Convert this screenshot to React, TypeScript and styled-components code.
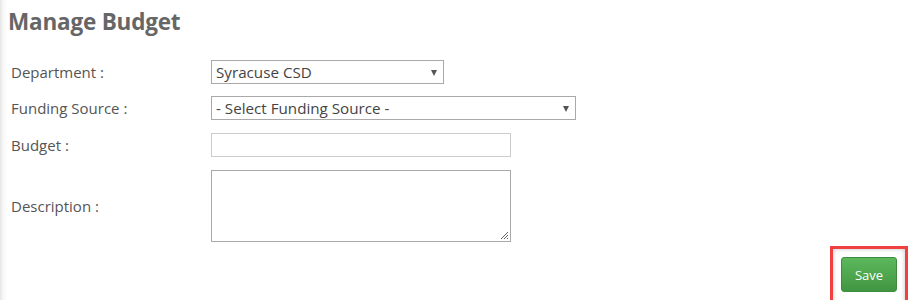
import React from "react";
import styled, { createGlobalStyle } from "styled-components";

const GlobalStyle = createGlobalStyle`
  html, body {
    margin: 0;
    padding: 0;
    background: #fff;
  }
  body {
    font-family: "Open Sans", "Noto Sans", sans-serif;
    color: #555;
  }
`;

const Page = styled.div`
  position: relative;
  width: 924px;
  height: 300px;
  overflow: hidden;
  background: linear-gradient(to right, #e6e6e6 0px, #f7f7f7 3px, #fff 7px);
`;

const Title = styled.h2`
  margin: 0;
  padding: 5px 0 0 8px;
  font-size: 22.5px;
  font-weight: 700;
  color: #666;
  line-height: 34px;
  letter-spacing: -0.2px;
`;

const Form = styled.div`
  display: grid;
  grid-template-columns: 200px auto;
  row-gap: 12px;
  padding: 21px 0 0 11px;
  align-items: center;
`;

const Label = styled.label`
  font-size: 15px;
  color: #555;
  line-height: 20px;
`;

const Field = styled.div<{ $gap?: number }>`
  display: flex;
  margin-top: ${(p) => p.$gap ?? 0}px;
`;

const SelectBox = styled.div<{ $width: number }>`
  position: relative;
  box-sizing: border-box;
  width: ${(p) => p.$width}px;
  height: 24px;
  border: 1px solid #a9a9a9;
  padding: 0 4px;
  font-size: 15.2px;
  line-height: 22px;
  color: #444;
  background: #fff;
`;

const Arrow = styled.span`
  position: absolute;
  right: 6px;
  top: 9px;
  width: 0;
  height: 0;
  border-left: 3.5px solid transparent;
  border-right: 3.5px solid transparent;
  border-top: 6px solid #555;
`;

const TextInput = styled.div`
  box-sizing: border-box;
  width: 300px;
  height: 24px;
  border: 1px solid #ccc;
  background: #fff;
`;

const TextArea = styled.div`
  position: relative;
  box-sizing: border-box;
  width: 300px;
  height: 72px;
  border: 1px solid #a9a9a9;
  background: #fff;
`;

const Grip = styled.svg`
  position: absolute;
  right: 1px;
  bottom: 1px;
`;

const Footer = styled.div`
  display: flex;
  justify-content: flex-end;
  padding: 4px 16px 0 0;
`;

const Highlight = styled.div`
  border: 3px solid #f04040;
  border-bottom: none;
  padding: 8px 8px 12px 8px;
  box-shadow: inset 0 0 4px rgba(0, 0, 0, 0.25);
`;

const SaveButton = styled.button`
  width: 56px;
  height: 35px;
  border: 1px solid #3d8b3d;
  border-radius: 3px;
  background: linear-gradient(#5cb85c, #419641);
  color: #fff;
  font-family: "Open Sans", "Noto Sans", sans-serif;
  font-size: 13px;
  padding: 0;
`;

export default function App() {
  return (
    <Page>
      <GlobalStyle />
      <Title>Manage Budget</Title>
      <Form>
        <Label>Department :</Label>
        <Field>
          <SelectBox $width={233}>
            Syracuse CSD
            <Arrow />
          </SelectBox>
        </Field>
        <Label>Funding Source :</Label>
        <Field>
          <SelectBox $width={365}>
            - Select Funding Source -
            <Arrow />
          </SelectBox>
        </Field>
        <Label>Budget :</Label>
        <Field $gap={1}>
          <TextInput />
        </Field>
        <Label>Description :</Label>
        <Field $gap={1}>
          <TextArea>
            <Grip width="9" height="9" viewBox="0 0 9 9">
              <path d="M8 1 L1 8 M8 4 L4 8 M8 7 L7 8" stroke="#666" strokeWidth="1" />
            </Grip>
          </TextArea>
        </Field>
      </Form>
      <Footer>
        <Highlight>
          <SaveButton>Save</SaveButton>
        </Highlight>
      </Footer>
    </Page>
  );
}
